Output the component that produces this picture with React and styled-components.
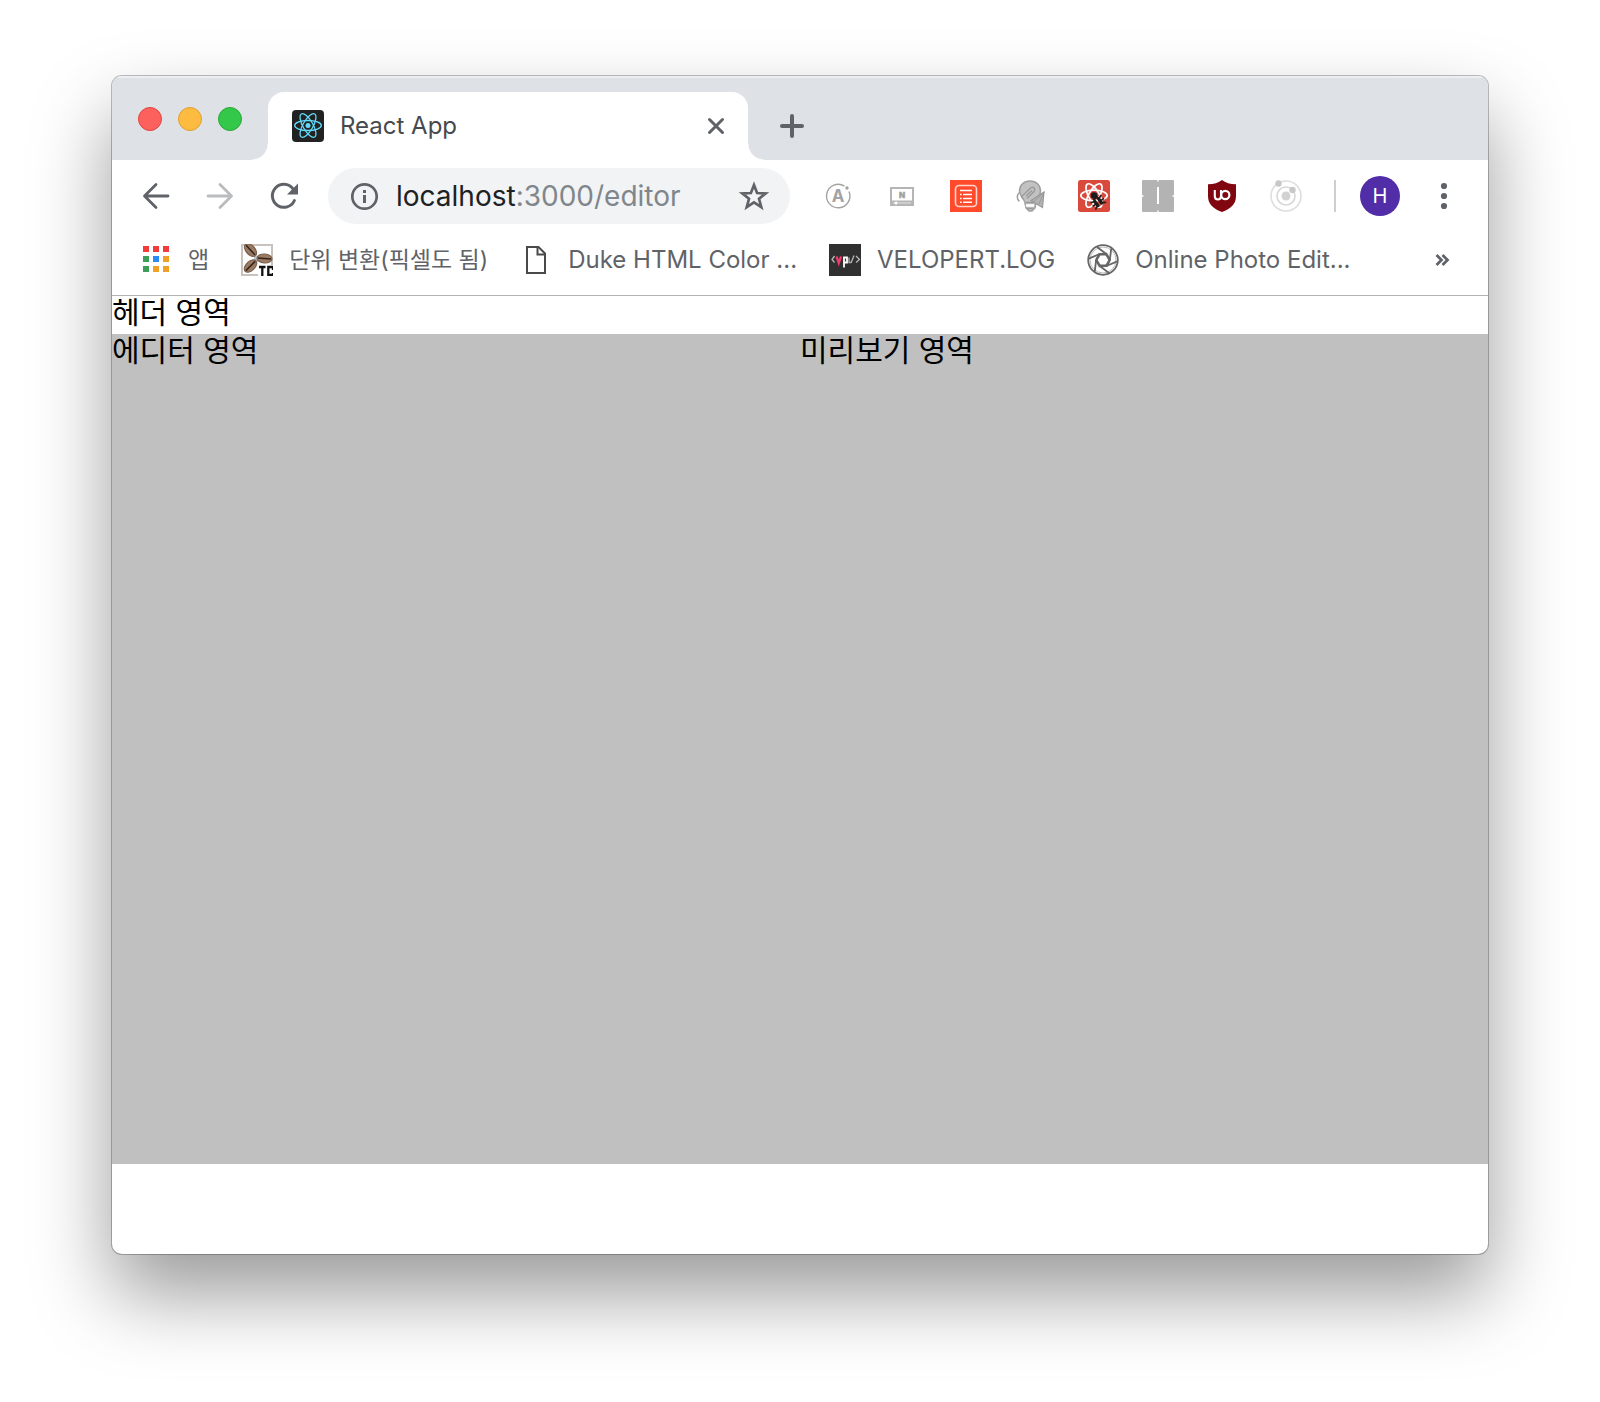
import React from 'react';
import styled, { createGlobalStyle } from 'styled-components';

const GlobalStyle = createGlobalStyle`
  *, *::before, *::after { box-sizing: border-box; }
  body {
    margin: 0;
    background: #fff;
    font-family: Inter, "Noto Sans CJK KR", sans-serif;
  }
  button, input { font: inherit; }
`;

const Desktop = styled.div`
  display: flex;
  flex-direction: column;
  min-height: 100vh;
  padding: 76px 7% 148px;
`;

const BrowserWindow = styled.div`
  display: flex;
  flex: 1;
  flex-direction: column;
  min-width: 0;
  overflow: hidden;
  border-radius: 10px;
  background: #fff;
  box-shadow: 0 0 0 1px rgba(0, 0, 0, 0.25), 0 40px 80px rgba(0, 0, 0, 0.4);
`;

const TabStrip = styled.div`
  display: flex;
  align-items: flex-end;
  height: 84px;
  padding: 2px 0 0 26px;
  background: #dee1e6;
  box-shadow: inset 0 2px 0 #eceef1;
`;

const TrafficLights = styled.div`
  display: flex;
  align-self: center;
  gap: 16px;
  margin-right: 26px;
`;

const Light = styled.button`
  width: 24px;
  height: 24px;
  padding: 0;
  border: 1px solid ${(p) => p.$edge};
  border-radius: 50%;
  background: ${(p) => p.$fill};
`;

const Tab = styled.div`
  position: relative;
  display: flex;
  flex: 0 1 480px;
  align-items: center;
  gap: 16px;
  min-width: 0;
  height: 68px;
  padding: 0 16px 0 24px;
  border-radius: 16px 16px 0 0;
  background: #fff;

  &::before,
  &::after {
    content: '';
    position: absolute;
    bottom: 0;
    width: 16px;
    height: 16px;
  }
  &::before {
    right: 100%;
    background: radial-gradient(circle at 0 0, transparent 15px, #fff 16px);
  }
  &::after {
    left: 100%;
    background: radial-gradient(circle at 100% 0, transparent 15px, #fff 16px);
  }
`;

const TabTitle = styled.span`
  flex: 1;
  overflow: hidden;
  color: #45494d;
  font-size: 24px;
  line-height: 32px;
  white-space: nowrap;
`;

const IconButton = styled.button`
  display: flex;
  flex: none;
  align-items: center;
  justify-content: center;
  width: 32px;
  height: 32px;
  padding: 0;
  border: 0;
  background: none;
  color: ${(p) => (p.$faded ? '#babcbe' : '#5f6368')};
`;

const NewTab = styled.div`
  display: flex;
  align-items: center;
  height: 68px;
  padding-left: 28px;
`;

const Toolbar = styled.div`
  display: flex;
  align-items: center;
  height: 72px;
  padding: 0 28px;
`;

const NavButtons = styled.nav`
  display: flex;
  gap: 32px;
  margin-right: 28px;
`;

const AddressBar = styled.div`
  display: flex;
  flex: 1;
  align-items: center;
  min-width: 0;
  height: 56px;
  padding: 0 20px;
  border-radius: 28px;
  background: #f1f3f4;
`;

const Address = styled.a`
  flex: 1;
  padding-left: 16px;
  overflow: hidden;
  color: #80868b;
  font-size: 28px;
  line-height: 36px;
  text-decoration: none;
  white-space: nowrap;
`;

const Host = styled.span`
  color: #202124;
`;

const Extensions = styled.div`
  display: flex;
  gap: 32px;
  margin: 0 32px;
`;

const Divider = styled.div`
  width: 2px;
  height: 32px;
  margin-right: 24px;
  background: #cdcfd1;
`;

const Avatar = styled.button`
  width: 40px;
  height: 40px;
  margin-right: 28px;
  padding: 0;
  border: 0;
  border-radius: 50%;
  background: #512da8;
  color: #fff;
  font-size: 20px;
`;

const Bookmarks = styled.nav`
  display: flex;
  align-items: center;
  gap: 32px;
  height: 64px;
  padding: 0 30px 8px 28px;
  border-bottom: 1px solid #b3b3b3;
`;

const BookmarkLink = styled.a`
  display: flex;
  flex: none;
  align-items: center;
  gap: 16px;
  color: #5f6368;
  font-size: ${(p) => (p.$hangul ? '23px' : '24px')};
  line-height: 32px;
  text-decoration: none;
  white-space: nowrap;
`;

const MoreSlot = styled.div`
  margin-left: auto;
`;

const PageHeader = styled.header`
  padding-bottom: 4px;
  color: #000;
  font-family: "Liberation Sans", "Noto Sans CJK KR", sans-serif;
  font-size: 30px;
  line-height: 34px;
`;

const Workspace = styled.main`
  display: grid;
  flex: 1;
  grid-template-columns: 1fr 1fr;
  margin-bottom: 90px;
  background: #c0c0c0;
`;

const Pane = styled.section`
  color: #000;
  font-family: "Liberation Sans", "Noto Sans CJK KR", sans-serif;
  font-size: 30px;
  line-height: 34px;
`;

const Icon = ({ children, size = 32, ...rest }) => (
  <svg width={size} height={size} viewBox="0 0 32 32" fill="none" aria-hidden="true" {...rest}>
    {children}
  </svg>
);

const Orbits = ({ cx, cy, rx, ry, ...rest }) => (
  <g fill="none" {...rest}>
    {[0, 60, 120].map((a) => (
      <ellipse key={a} cx={cx} cy={cy} rx={rx} ry={ry} transform={`rotate(${a} ${cx} ${cy})`} />
    ))}
  </g>
);

const ReactFavicon = () => (
  <Icon>
    <rect width="32" height="32" rx="4" fill="#222" />
    <Orbits cx={16} cy={15.5} rx={13.3} ry={5} stroke="#61dafb" strokeWidth="1.3" />
    <circle cx="16" cy="15.5" r="2.5" fill="#61dafb" />
  </Icon>
);

const CloseIcon = () => (
  <Icon><path d="M9.500 9.500l13 13M22.500 9.500l-13 13" stroke="currentColor" strokeWidth="3" strokeLinecap="round" /></Icon>
);

const PlusIcon = () => (
  <Icon><path d="M16 6v20M6 16h20" stroke="currentColor" strokeWidth="4" strokeLinecap="round" /></Icon>
);

const BackIcon = () => (
  <Icon><path d="M28 16H5M16 4.500L4.500 16 16 27.500" stroke="currentColor" strokeWidth="2.800" strokeLinecap="round" strokeLinejoin="round" /></Icon>
);

const ForwardIcon = () => (
  <Icon><path d="M4 16h23M16 4.500L27.500 16 16 27.500" stroke="currentColor" strokeWidth="2.800" strokeLinecap="round" strokeLinejoin="round" /></Icon>
);

const ReloadIcon = () => (
  <Icon>
    <path d="M26.400 20.500A11.500 11.500 0 1 1 25 8.800" stroke="currentColor" strokeWidth="3" strokeLinecap="round" />
    <path d="M30 3.500v11H19z" fill="currentColor" />
  </Icon>
);

const InfoIcon = () => (
  <Icon>
    <circle cx="16.500" cy="16.500" r="12.200" stroke="currentColor" strokeWidth="2.700" />
    <path d="M16.500 15V23M16.500 10v3" stroke="currentColor" strokeWidth="3" />
  </Icon>
);

const StarIcon = () => (
  <Icon>
    <path d="M16 5l3.100 8 8.600.4-6.700 5.400 2.300 8.300-7.300-4.700-7.300 4.700L11 18.800 4.300 13.400l8.600-.4z" stroke="currentColor" strokeWidth="2.700" />
  </Icon>
);

const MenuIcon = () => (
  <Icon>
    <circle cx="16" cy="6" r="3.100" fill="currentColor" />
    <circle cx="16" cy="16" r="3.100" fill="currentColor" />
    <circle cx="16" cy="26" r="3.100" fill="currentColor" />
  </Icon>
);

const ApolloIcon = () => (
  <Icon>
    <path d="M27 11.500A11.700 11.700 0 1 1 22.500 6.200" stroke="#a3a3a3" strokeWidth="1.400" />
    <circle cx="25" cy="8" r="1.700" fill="#a3a3a3" />
    <text x="16" y="21.500" textAnchor="middle" fontSize="17" fontWeight="700" fill="#a3a3a3">A</text>
  </Icon>
);

const NetflixPlayerIcon = () => (
  <Icon>
    <rect x="5" y="8" width="22" height="17" stroke="#b5b5b5" strokeWidth="2" />
    <path d="M4 23h24" stroke="#b5b5b5" strokeWidth="5" />
    <path d="M7 23h18" stroke="#e4e4e4" strokeWidth="1" />
    <circle cx="10" cy="23" r="1.500" fill="#fff" />
    <text x="16" y="17.500" textAnchor="middle" fontSize="8" fontWeight="800" fill="#a0a0a0" stroke="#a0a0a0" strokeWidth="0.500">N</text>
  </Icon>
);

const ListIcon = () => (
  <Icon>
    <rect width="32" height="32" fill="#ff4a2b" />
    <rect x="5.500" y="5.500" width="21" height="21" rx="3.500" stroke="#ffd5cc" strokeWidth="1.600" />
    <path d="M10 10.500h12M13 14.500h9M13 18.500h9M13 22.300h9" stroke="#fff" strokeWidth="1.600" />
    <path d="M10 14.500h1.600M10 18.500h1.600M10 22.300h1.600" stroke="#fff" strokeWidth="1.600" />
  </Icon>
);

const BulbIcon = () => (
  <Icon>
    <path d="M16 1C9.500 1 5.500 5.500 5.500 11c0 5 4.800 7.500 5.500 12l1 5 3 3h3l3-3 1-5c.7-4.500 4.500-7 4.500-12C26.500 5.500 22.500 1 16 1z" fill="#c2c2c2" stroke="#a0a0a0" strokeWidth="1.500" />
    <path d="M6 12c-3.500 2.500-3.500 7-.5 9.500" stroke="#a0a0a0" strokeWidth="1.500" />
    <path d="M9 19l-1.500-2.500 9-8.500c3-2 5.500 1 3.500 3.500l-7 7M12 16l6-5.500" stroke="#999" strokeWidth="1.300" />
    <path d="M17 20.500L30 12l-1.500 15.500z" fill="#b4b4b4" stroke="#999" strokeWidth="1.200" />
    <path d="M20 21.500L30 12l-5 12" stroke="#999" />
    <path d="M13 25.500h6" stroke="#fff" strokeWidth="2.500" strokeLinecap="round" />
    <path d="M12 22.500h8M13 28.500h6" stroke="#999" strokeWidth="1.300" />
  </Icon>
);

const ReactBugIcon = () => (
  <Icon>
    <rect width="32" height="32" rx="2.500" fill="#d94a3d" />
    <Orbits cx={16} cy={15.5} rx={13.2} ry={5.3} stroke="#fff" strokeWidth="1.700" />
    <circle cx="16" cy="15.500" r="3.300" fill="#1c1c1c" />
    <g transform="rotate(-35 20 22)">
      <rect x="16" y="18" width="3.300" height="8.500" rx="1.500" fill="#1c1c1c" />
      <rect x="20.700" y="18" width="3.300" height="8.500" rx="1.500" fill="#1c1c1c" />
      <path d="M17 17.500h6" stroke="#1c1c1c" strokeWidth="1.800" />
      <path d="M13.500 18l3 1.500M26.500 18l-3 1.500M13 22.500h4M27 22.500h-4M13.500 27l3-2M26.500 27l-3-2" stroke="#1c1c1c" strokeWidth="1.600" />
    </g>
  </Icon>
);

const PanelIcon = () => (
  <Icon>
    <rect width="32" height="32" rx="1" fill="#b3b3b3" />
    <path d="M16 7v17" stroke="#fff" strokeWidth="2" />
    <path d="M16 0v1.500M16 30.500V32M0 16h1.500M30.500 16H32" stroke="#fff" strokeWidth="1.500" />
  </Icon>
);

const ShieldIcon = () => (
  <Icon>
    <path d="M16 0c3.500 2.800 8 4.200 14 4.300V16c0 8-5 12.500-14 16C7 28.500 2 24 2 16V4.300C8 4.200 12.500 2.800 16 0z" fill="#800610" />
    <path d="M8.800 10v6.300c0 2 1.200 3.200 3.100 3.200s3.100-1.200 3.100-3.200V10" stroke="#fff" strokeWidth="2.100" />
    <circle cx="19.300" cy="15" r="4.100" stroke="#fff" strokeWidth="2.200" />
  </Icon>
);

const OrbitIcon = () => (
  <Icon>
    <circle cx="16" cy="16" r="15" stroke="#dedede" strokeWidth="1.600" />
    <circle cx="16" cy="16" r="9" stroke="#d8d8d8" strokeWidth="1.700" />
    <circle cx="16" cy="16" r="4.500" fill="#d2d2d2" />
    <circle cx="8.500" cy="3.500" r="3.200" fill="#c8c8c8" />
    <circle cx="22.500" cy="10" r="3.200" fill="#c8c8c8" />
  </Icon>
);

const APP_COLORS = ['#f33b3b', '#f33b3b', '#f33b3b', '#3c9e5a', '#2a8af6', '#f0a024', '#3c9e5a', '#f0a024', '#f0a024'];

const AppsIcon = () => (
  <Icon>
    {APP_COLORS.map((c, i) => (
      <rect key={i} x={3 + (i % 3) * 10} y={2 + Math.floor(i / 3) * 10} width="6" height="6" fill={c} />
    ))}
  </Icon>
);

const BeansIcon = () => (
  <Icon>
    <rect x="1" y="1" width="30" height="30" fill="#fff" stroke="#c9c2bd" strokeWidth="2" />
    <path d="M13 9v13l6-7z" fill="#b9c3cb" />
    {[[9.5, 6, 48], [23.5, 14.500, 4], [9.5, 22, -45]].map(([x, y, a]) => (
      <g key={a} transform={`translate(${x} ${y}) rotate(${a})`}>
        <ellipse rx="7.500" ry="4.500" fill="#9b7b62" stroke="#7a614f" strokeWidth="1.200" />
        <path d="M-6.500 0H6.500" stroke="#35251c" strokeWidth="1.600" />
      </g>
    ))}
    <rect x="17" y="21" width="15" height="11" fill="#fff" />
    <path d="M18 23h6.500M21.300 23v9M32 23h-4.700v8H32v-2M32 23v3" stroke="#111" strokeWidth="2.300" />
  </Icon>
);

const FileIcon = () => (
  <Icon>
    <path d="M7 3h11.500L25 9.500V29H7z" stroke="#4a4a4a" strokeWidth="2" />
    <path d="M17.500 3v7.500H25" stroke="#4a4a4a" strokeWidth="2" />
  </Icon>
);

const VelopertIcon = () => (
  <Icon>
    <rect width="32" height="32" fill="#303030" />
    <path d="M5.500 12L3 15.500l2.500 3M27 12l3.500 3.500-3.500 3M25 11.500l-3 7.500" stroke="#b5b5b5" strokeWidth="1.300" />
    <path d="M7.500 12.500l2.300 6.500 2.300-6.500" stroke="#f0386c" strokeWidth="2.300" />
    <path d="M15 12.500v11M15 13.500h3v5h-3" stroke="#fff" strokeWidth="1.800" />
    <path d="M20 13.500v5h2" stroke="#aaa" strokeWidth="1.400" />
  </Icon>
);

const ApertureIcon = () => (
  <Icon stroke="#666" strokeWidth="1.800">
    <circle cx="16" cy="16" r="14.800" />
    <circle cx="16" cy="16" r="13" stroke="#bbb" strokeWidth="1" />
    {[0, 60, 120, 180, 240, 300].map((a) => (
      <path key={a} d="M12.500 10.500h7.500M20 10.500L10 3M20 10.500l3.500 6" transform={`rotate(${a} 16 16)`} />
    ))}
  </Icon>
);

const MoreIcon = () => (
  <Icon>
    <path d="M10.500 11l5 5-5 5M16.500 11l5 5-5 5" stroke="currentColor" strokeWidth="2.700" />
  </Icon>
);

const LIGHTS = [
  { label: 'Close window', fill: '#fc615d', edge: '#e0443e' },
  { label: 'Minimize window', fill: '#fdbc40', edge: '#dfa032' },
  { label: 'Zoom window', fill: '#34c84a', edge: '#27aa35' },
];

const EXTENSIONS = [
  ['Apollo', ApolloIcon],
  ['Player', NetflixPlayerIcon],
  ['List', ListIcon],
  ['Ideas', BulbIcon],
  ['React debugger', ReactBugIcon],
  ['Panel', PanelIcon],
  ['Blocker', ShieldIcon],
  ['Orbit', OrbitIcon],
];

const BOOKMARKS = [
  { name: '앱', Glyph: AppsIcon, hangul: true },
  { name: '단위 변환(픽셀도 됨)', Glyph: BeansIcon, hangul: true },
  { name: 'Duke HTML Color ...', Glyph: FileIcon },
  { name: 'VELOPERT.LOG', Glyph: VelopertIcon },
  { name: 'Online Photo Edit...', Glyph: ApertureIcon },
];

export default function App() {
  return (
    <>
      <GlobalStyle />
      <Desktop>
        <BrowserWindow>
          <TabStrip>
            <TrafficLights>
              {LIGHTS.map((l) => (
                <Light key={l.label} aria-label={l.label} $fill={l.fill} $edge={l.edge} />
              ))}
            </TrafficLights>
            <Tab>
              <ReactFavicon />
              <TabTitle>React App</TabTitle>
              <IconButton aria-label="Close tab"><CloseIcon /></IconButton>
            </Tab>
            <NewTab>
              <IconButton aria-label="New tab"><PlusIcon /></IconButton>
            </NewTab>
          </TabStrip>
          <Toolbar>
            <NavButtons>
              <IconButton aria-label="Back"><BackIcon /></IconButton>
              <IconButton aria-label="Forward" $faded><ForwardIcon /></IconButton>
              <IconButton aria-label="Reload"><ReloadIcon /></IconButton>
            </NavButtons>
            <AddressBar>
              <IconButton aria-label="Site information"><InfoIcon /></IconButton>
              <Address href="#editor"><Host>localhost</Host>:3000/editor</Address>
              <IconButton aria-label="Bookmark this page"><StarIcon /></IconButton>
            </AddressBar>
            <Extensions>
              {EXTENSIONS.map(([name, Glyph]) => (
                <IconButton key={name} aria-label={name}><Glyph /></IconButton>
              ))}
            </Extensions>
            <Divider />
            <Avatar aria-label="Profile H">H</Avatar>
            <IconButton aria-label="Menu"><MenuIcon /></IconButton>
          </Toolbar>
          <Bookmarks>
            {BOOKMARKS.map(({ name, Glyph, hangul }) => (
              <BookmarkLink key={name} href="#bookmark" $hangul={hangul}>
                <Glyph />
                {name}
              </BookmarkLink>
            ))}
            <MoreSlot>
              <IconButton aria-label="More bookmarks"><MoreIcon /></IconButton>
            </MoreSlot>
          </Bookmarks>
          <PageHeader>헤더 영역</PageHeader>
          <Workspace>
            <Pane>에디터 영역</Pane>
            <Pane>미리보기 영역</Pane>
          </Workspace>
        </BrowserWindow>
      </Desktop>
    </>
  );
}
